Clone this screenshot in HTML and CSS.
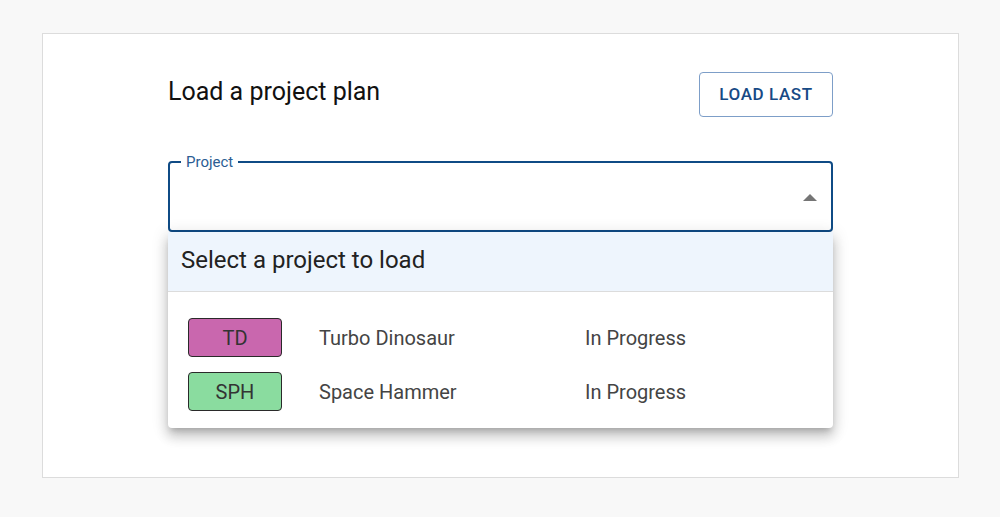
FILE: index.html
```html
<!DOCTYPE html>
<html>
<head>
<meta charset="utf-8">
<link rel="stylesheet" href="styles.css">
</head>
<body>
<div class="card">
  <div class="content">
    <div class="header">
      <h1 class="title">Load a project plan</h1>
      <button class="btn">LOAD LAST</button>
    </div>
    <div class="field">
      <div class="outline">
        <span class="label">Project</span>
        <svg class="arrow" width="14" height="7" viewBox="0 0 14 7"><path d="M0 7 L7 0 L14 7 Z" fill="#757575"/></svg>
      </div>
      <div class="menu">
        <div class="menu-head">Select a project to load</div>
        <div class="menu-list">
          <div class="row">
            <span class="chip chip-td">TD</span>
            <span class="name">Turbo Dinosaur</span>
            <span class="status">In Progress</span>
          </div>
          <div class="row">
            <span class="chip chip-sph">SPH</span>
            <span class="name">Space Hammer</span>
            <span class="status">In Progress</span>
          </div>
        </div>
      </div>
    </div>
  </div>
</div>
</body>
</html>
```

FILE: styles.css
```css
* { box-sizing: border-box; }
html, body { margin: 0; padding: 0; }
body {
  background: #f8f8f8;
  font-family: Roboto, "Liberation Sans", Arial, sans-serif;
  width: 1000px;
  height: 517px;
  overflow: hidden;
}
.card {
  margin: 33px 0 0 42px;
  width: 917px;
  height: 445px;
  background: #fff;
  border: 1px solid #dcdcdc;
  padding-top: 38px;
}
.content {
  width: 665px;
  margin: 0 auto;
  position: relative;
}
.header {
  display: flex;
  justify-content: space-between;
  align-items: flex-start;
  height: 45px;
}
.title {
  margin: 0;
  padding-top: 5px;
  font-size: 25px;
  font-weight: 400;
  line-height: 30px;
  color: #111;
}
.btn {
  width: 134px;
  height: 45px;
  background: #fff;
  border: 1px solid #7d9ec8;
  border-radius: 4px;
  color: #174a85;
  font-family: Roboto, "Liberation Sans", Arial, sans-serif;
  font-size: 17px;
  font-weight: 500;
  letter-spacing: 0.6px;
  padding: 0 0 2px;
}
.field {
  margin-top: 44px;
  position: relative;
}
.outline {
  position: relative;
  height: 71px;
  border: 2px solid #0f4b85;
  border-radius: 4px;
}
.label {
  position: absolute;
  left: 11px;
  top: -10px;
  padding: 0 5px;
  background: #fff;
  font-size: 15px;
  line-height: 18px;
  color: #2b5d93;
}
.arrow {
  position: absolute;
  right: 14px;
  top: 31px;
  display: block;
}
.menu {
  position: absolute;
  left: 0;
  right: 0;
  top: 71px;
  background: #fff;
  border-radius: 0 0 4px 4px;
  box-shadow: 0 5px 6px -3px rgba(0,0,0,0.2), 0 9px 12px 1px rgba(0,0,0,0.14), 0 3px 16px 2px rgba(0,0,0,0.12);
}
.menu-head {
  height: 60px;
  background: #eef5fd;
  border-bottom: 1px solid #dcdcdc;
  padding-left: 13px;
  font-size: 24px;
  line-height: 57px;
  color: #222;
}
.menu-list {
  padding: 18px 0 10px;
}
.row {
  display: grid;
  grid-template-columns: 94px 303px 1fr;
  align-items: center;
  height: 54px;
  padding-left: 20px;
  font-size: 20px;
  color: #444;
}
.name, .status { padding-top: 2px; }
.name { padding-left: 37px; }
.chip {
  height: 39px;
  border: 1px solid #2a2a2a;
  border-radius: 4px;
  display: flex;
  align-items: center;
  justify-content: center;
  padding-top: 1px;
  font-size: 20px;
  color: #333;
}
.chip-td { background: #c967ae; }
.chip-sph { background: #8adc9f; }
```
